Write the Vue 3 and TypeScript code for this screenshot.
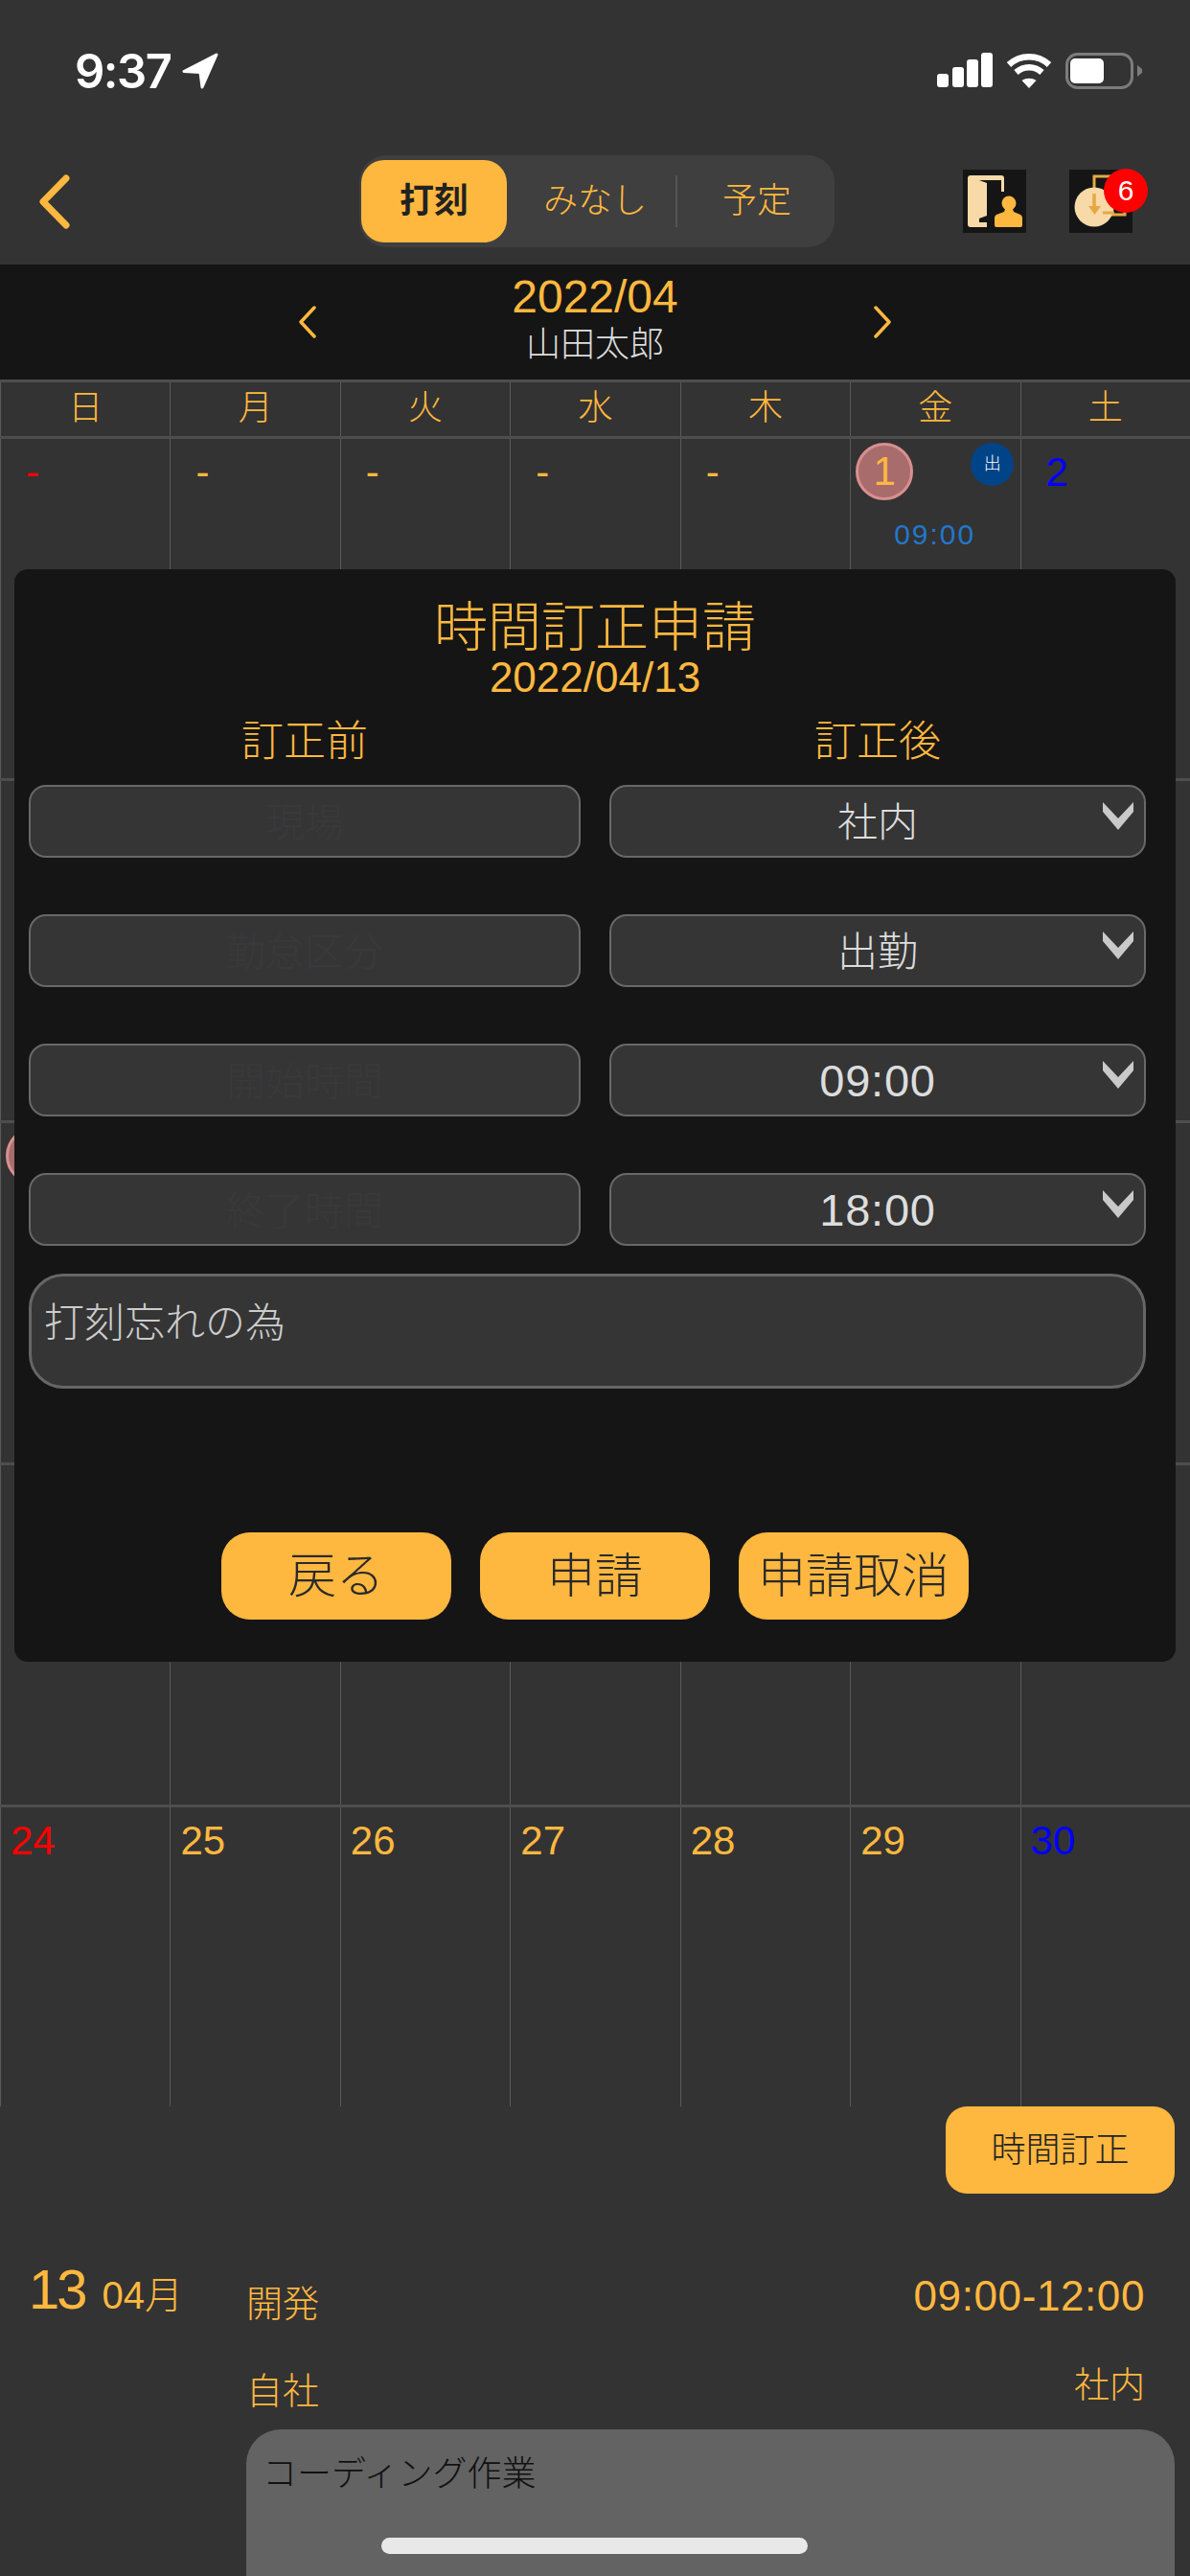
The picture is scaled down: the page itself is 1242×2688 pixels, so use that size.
<script setup lang="ts">
type Day = { label?: string; tone?: string; marked?: boolean; badge?: string; time?: string }

const weekdays = ['日', '月', '火', '水', '木', '金', '土']
const tabs = ['打刻', 'みなし', '予定']

// rows 2-4 sit behind the dialog, only the circle of the 10th peeks out
const weeks: Day[][] = [
  [
    { label: '-', tone: 'sun' }, { label: '-' }, { label: '-' }, { label: '-' }, { label: '-' },
    { label: '1', marked: true, badge: '出', time: '09:00' },
    { label: '2', tone: 'sat' },
  ],
  [{}, {}, {}, {}, {}, {}, {}],
  [{ marked: true }, {}, {}, {}, {}, {}, {}],
  [{}, {}, {}, {}, {}, {}, {}],
  [
    { label: '24', tone: 'sun' }, { label: '25' }, { label: '26' }, { label: '27' },
    { label: '28' }, { label: '29' }, { label: '30', tone: 'sat' },
  ],
]

const fields = [
  { before: '現場', after: '社内' },
  { before: '勤怠区分', after: '出勤' },
  { before: '開始時間', after: '09:00' },
  { before: '終了時間', after: '18:00' },
]

const actions = ['戻る', '申請', '申請取消']
</script>

<template>
  <div class="screen">
    <div class="status">
      <div class="clock">
        <span>9:37</span>
        <svg width="38" height="38" viewBox="0 0 38 38"><path d="M36 2 2 19.500l17 1L21 36z" fill="#fff" stroke="#fff" stroke-width="3" stroke-linejoin="round" /></svg>
      </div>
      <div class="indicators">
        <svg width="58" height="37" viewBox="0 0 58 37" fill="#fff">
          <rect x="0" y="22" width="12" height="14" rx="3" />
          <rect x="16" y="15" width="12" height="21" rx="3" />
          <rect x="31" y="7" width="12" height="29" rx="3" />
          <rect x="46" y="0" width="12" height="36" rx="3" />
        </svg>
        <svg width="48" height="37" viewBox="0 0 48 37" fill="none" stroke="#fff" stroke-width="6.500">
          <path d="M3 12.500c12-11 30-11 42 0" />
          <path d="M10.500 20.500c8-7 19-7 27 0" />
          <path d="M24 37l-7.500-8c4.500-3 10.500-3 15 0z" fill="#fff" stroke="none" />
        </svg>
        <svg width="80" height="38" viewBox="0 0 80 38">
          <rect x="1.500" y="1.500" width="68" height="35" rx="11" fill="none" stroke="#7c7c7c" stroke-width="3" />
          <rect x="5" y="6" width="35" height="26" rx="5" fill="#fff" />
          <path d="M75 13l5 4v4l-5 4z" fill="#7c7c7c" />
        </svg>
      </div>
    </div>

    <div class="nav">
      <svg class="back" width="34" height="57" viewBox="0 0 34 57" fill="none"><path d="M29 4 5 28.500 29 53" stroke="#ffb83f" stroke-width="7" stroke-linecap="round" stroke-linejoin="round" /></svg>
      <div class="tabs">
        <div v-for="(tab, i) in tabs" :key="tab" class="tab" :class="['tab-' + i]">{{ tab }}</div>
      </div>
      <div class="tools">
        <svg class="tool" width="66" height="66" viewBox="0 0 66 66">
          <path d="M8 6h32a3 3 0 0 1 3 3v14h-3V11H17l8 3v34l-8 3v4h8v5H8a3 3 0 0 1-3-3V9a3 3 0 0 1 3-3z" fill="#f8d9a8" />
          <circle cx="48" cy="35" r="7.500" fill="#ffb83f" />
          <path d="M44 41h8l1 3 7 3c2 1 2 3 2 5v6a2 2 0 0 1-2 2H35a2 2 0 0 1-2-2v-6c0-2 0-4 2-5l8-3z" fill="#ffb83f" />
        </svg>
        <div class="tool-wrap">
          <svg class="tool" width="66" height="66" viewBox="0 0 66 66">
            <path d="M26 20V7h32v40H44" fill="none" stroke="#e5a944" stroke-width="3" />
            <circle cx="26" cy="39" r="20.500" fill="#f8d9a8" />
            <path d="M26 25v14" stroke="#e5a944" stroke-width="3.500" />
            <path d="M20 38h13l-6.500 9z" fill="#e5a944" />
            <path d="M35 45h12" stroke="#e5a944" stroke-width="3" />
          </svg>
          <span class="count">6</span>
        </div>
      </div>
    </div>

    <div class="month">
      <svg width="20" height="34" viewBox="0 0 20 34" fill="none"><path d="M17 2 3 17l14 15" stroke="#ffb83f" stroke-width="3.500" stroke-linecap="round" stroke-linejoin="round" /></svg>
      <div class="month-text">
        <div class="month-name">2022/04</div>
        <div class="person">山田太郎</div>
      </div>
      <svg width="20" height="34" viewBox="0 0 20 34" fill="none"><path d="M3 2l14 15L3 32" stroke="#ffb83f" stroke-width="3.500" stroke-linecap="round" stroke-linejoin="round" /></svg>
    </div>

    <div class="calendar">
      <div class="week head">
        <div v-for="w in weekdays" :key="w" class="weekday">{{ w }}</div>
      </div>
      <div v-for="(week, r) in weeks" :key="r" class="week">
        <div v-for="(day, c) in week" :key="c" class="day" :class="{ first: r === 0 }">
          <span v-if="day.marked" class="mark">{{ day.label }}</span>
          <span v-else-if="day.label" class="num" :class="day.tone">{{ day.label }}</span>
          <span v-if="day.badge" class="kind">{{ day.badge }}</span>
          <span v-if="day.time" class="start">{{ day.time }}</span>
        </div>
      </div>
    </div>

    <div class="fix-row">
      <div class="fix">時間訂正</div>
    </div>

    <div class="detail">
      <div class="date"><span class="date-day">13</span><span class="date-month">04月</span></div>
      <div class="info">
        <div class="info-row">
          <span class="info-left">開発</span>
          <span class="info-time">09:00-12:00</span>
        </div>
        <div class="info-row second">
          <span class="info-left">自社</span>
          <span class="info-place">社内</span>
        </div>
        <div class="memo">コーディング作業</div>
      </div>
    </div>

    <div class="dialog">
      <div class="title">時間訂正申請</div>
      <div class="subtitle">2022/04/13</div>
      <div class="form">
        <div class="col-head">訂正前</div>
        <div class="col-head">訂正後</div>
        <template v-for="f in fields" :key="f.before">
          <div class="field muted">{{ f.before }}</div>
          <div class="field" :class="{ timed: f.after.includes(':') }">
            {{ f.after }}
            <svg class="caret" width="32" height="29" viewBox="0 0 32 29"><path d="M0 0l16 17L32 0v10L16 29 0 10z" fill="#c9c9c9" /></svg>
          </div>
        </template>
      </div>
      <div class="note">打刻忘れの為</div>
      <div class="actions">
        <div v-for="a in actions" :key="a" class="action">{{ a }}</div>
      </div>
    </div>

    <div class="home"></div>
  </div>
</template>

<style scoped>
.screen {
  position: relative;
  width: 1242px;
  height: 2688px;
  overflow: hidden;
  background: #333;
  font-family: "Liberation Sans", "Noto Sans CJK JP", sans-serif;
  font-weight: 300;
  color: #ffb83f;
}

.status {
  display: flex;
  justify-content: space-between;
  height: 162px;
  padding: 55px 50px 0 78px;
  box-sizing: border-box;
}

.clock {
  display: flex;
  align-items: flex-start;
  gap: 12px;
  font-family: Inter, sans-serif;
  font-size: 49px;
  line-height: 40px;
  font-weight: 600;
  letter-spacing: -1.5px;
  color: #fff;
}

.indicators {
  display: flex;
  align-items: flex-start;
  gap: 14px;
}

.nav {
  display: grid;
  grid-template-columns: 375px 496px 1fr;
  align-items: center;
  height: 114px;
  padding-bottom: 18px;
  box-sizing: border-box;
}

.back {
  margin-left: 40px;
}

.tabs {
  display: flex;
  align-items: center;
  height: 96px;
  padding-left: 2px;
  box-sizing: border-box;
  background: #3f3f3f;
  border-radius: 28px;
}

.tab {
  position: relative;
  height: 86px;
  line-height: 86px;
  box-sizing: border-box;
  text-align: center;
  font-size: 36px;
}

.tab-0 {
  width: 152px;
  background: #ffb83f;
  border-radius: 24px;
  color: #222;
  font-weight: 700;
}

.tab-1 {
  width: 176px;
  padding-left: 8px;
}

.tab-2 {
  width: 166px;
  padding-left: 4px;
}

.tab-2::before {
  content: "";
  position: absolute;
  left: 0;
  top: 16px;
  height: 54px;
  width: 2px;
  background: #555;
}

.tools {
  display: flex;
  justify-content: flex-end;
  gap: 45px;
  padding-right: 60px;
}

.tool {
  display: block;
  background: #151515;
}

.tool-wrap {
  position: relative;
}

.count {
  position: absolute;
  left: 36px;
  top: -1px;
  width: 46px;
  height: 46px;
  line-height: 46px;
  border-radius: 50%;
  background: #f00;
  color: #fff;
  text-align: center;
  font-size: 30px;
  font-weight: 400;
}

.month {
  display: flex;
  justify-content: center;
  align-items: center;
  gap: 200px;
  height: 120px;
  background: #151515;
}

.month-text {
  align-self: flex-start;
  width: 180px;
  padding-top: 9px;
  text-align: center;
  white-space: nowrap;
}

.month-name {
  font-size: 48px;
  line-height: 50px;
}

.person {
  display: flex;
  justify-content: center;
  font-size: 36px;
  line-height: 40px;
  margin-top: 5px;
  color: #ddd;
}

.calendar {
  height: 1802px;
  overflow: hidden;
}

.week {
  display: grid;
  grid-template-columns: repeat(7, 1fr);
  height: 357px;
  border-top: 3px solid #4e4e4e;
  box-sizing: border-box;
}

.week.head {
  height: 59px;
}

.weekday {
  border-left: 1px solid #5a5a5a;
  text-align: center;
  font-size: 36px;
  line-height: 54px;
}

.day {
  position: relative;
  border-left: 1px solid #5a5a5a;
  padding: 11px 0 0 10px;
}

.day.first {
  padding-left: 26px;
}

.num {
  font-size: 42px;
  line-height: 48px;
}

.num.sun {
  color: #f00;
}

.num.sat {
  color: #00f;
}

.mark {
  position: absolute;
  left: 5px;
  top: 4px;
  width: 60px;
  height: 60px;
  box-sizing: border-box;
  border: 3px solid #d88f8f;
  border-radius: 50%;
  background: #a86c6c;
  text-align: center;
  font-size: 42px;
  line-height: 54px;
}

.kind {
  position: absolute;
  left: 125px;
  top: 4px;
  width: 45px;
  height: 45px;
  border-radius: 50%;
  background: #004488;
  color: #fff;
  text-align: center;
  font-size: 18px;
  line-height: 45px;
}

.start {
  position: absolute;
  left: 45px;
  top: 82px;
  font-size: 30px;
  line-height: 36px;
  letter-spacing: 2px;
  color: #2277cc;
}

.fix-row {
  display: flex;
  justify-content: flex-end;
  padding-right: 16px;
}

.fix {
  width: 239px;
  height: 91px;
  line-height: 91px;
  background: #ffb83f;
  border-radius: 22px;
  text-align: center;
  font-size: 36px;
  color: #222;
}

.detail {
  display: flex;
  padding-top: 68px;
}

.date {
  display: flex;
  align-items: baseline;
  gap: 18px;
  width: 257px;
  height: 64px;
  padding-left: 30px;
  box-sizing: border-box;
  white-space: nowrap;
}

.date-day {
  font-size: 58px;
  line-height: 64px;
  letter-spacing: -3px;
}

.date-month {
  font-size: 40px;
}

.info {
  width: 969px;
  padding-top: 10px;
}

.info-row {
  display: flex;
  justify-content: space-between;
  align-items: flex-start;
  padding: 0 31px 0 0;
  height: 90px;
}

.info-left {
  font-size: 38px;
  line-height: 46px;
  padding-top: 14px;
}

.info-row.second .info-left {
  padding-top: 15px;
}

.info-time {
  font-size: 44px;
  line-height: 50px;
  letter-spacing: 0.6px;
  padding-top: 4px;
}

.info-place {
  font-size: 37px;
  line-height: 46px;
  padding-top: 10px;
}

.memo {
  height: 240px;
  margin-top: -12px;
  padding: 25px 17px;
  box-sizing: border-box;
  background: #636363;
  border-radius: 36px;
  font-size: 36px;
  line-height: 44px;
  color: #111;
}

.dialog {
  position: absolute;
  left: 15px;
  top: 594px;
  width: 1212px;
  height: 1140px;
  padding-top: 31px;
  box-sizing: border-box;
  background: #151515;
  border-radius: 14px;
}

.title {
  text-align: center;
  font-size: 56px;
  line-height: 60px;
}

.subtitle {
  text-align: center;
  font-size: 44px;
  line-height: 44px;
}

.form {
  display: grid;
  grid-template-columns: 576px 560px;
  column-gap: 30px;
  row-gap: 59px;
  padding: 20px 0 0 15px;
}

.col-head {
  text-align: center;
  font-size: 44px;
  line-height: 50px;
  margin-bottom: -39px;
}

.field {
  position: relative;
  height: 76px;
  line-height: 76px;
  box-sizing: border-box;
  border: 2px solid #686868;
  border-radius: 18px;
  background: #353535;
  text-align: center;
  font-size: 42px;
  color: #ddd;
}

.field.timed {
  font-size: 47px;
  line-height: 74px;
  letter-spacing: 0.8px;
}

.field.muted {
  font-size: 41px;
  color: #39393b;
}

.caret {
  position: absolute;
  right: 11px;
  top: 16px;
}

.note {
  height: 120px;
  width: 1166px;
  margin: 29px 0 0 15px;
  padding: 24px 0 0 13px;
  box-sizing: border-box;
  border: 3px solid #666;
  border-radius: 36px;
  background: #353535;
  font-size: 42px;
  line-height: 50px;
  color: #ccc;
}

.actions {
  display: flex;
  justify-content: center;
  gap: 30px;
  margin-top: 150px;
}

.action {
  width: 240px;
  height: 91px;
  line-height: 93px;
  background: #ffb83f;
  border-radius: 30px;
  text-align: center;
  font-size: 50px;
  color: #2a2a2a;
}

.home {
  position: absolute;
  left: 398px;
  top: 2648px;
  width: 445px;
  height: 17px;
  border-radius: 9px;
  background: #e8e8e8;
}
</style>
